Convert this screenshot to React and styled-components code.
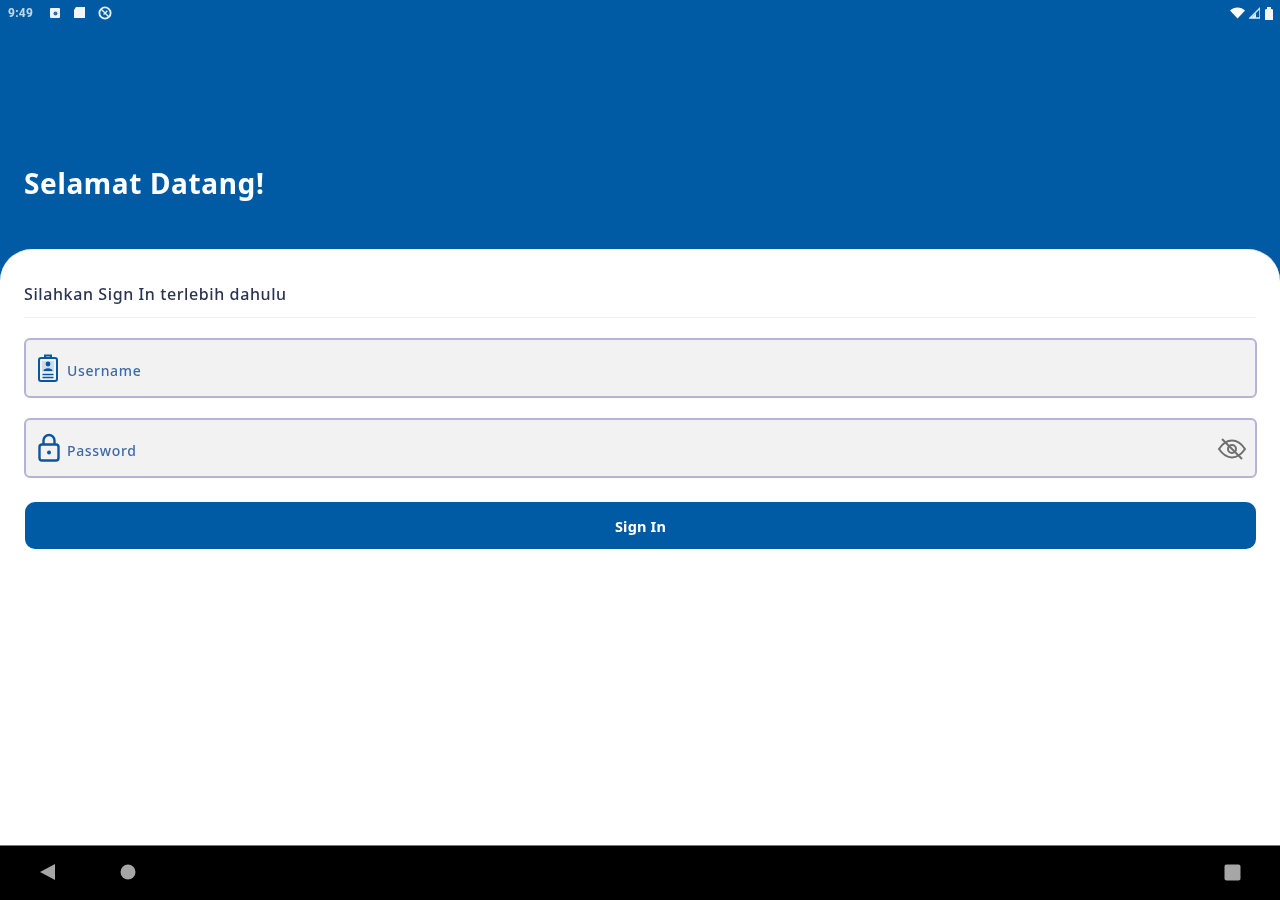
import React from "react";
import styled, { createGlobalStyle } from "styled-components";

const Global = createGlobalStyle`
  html, body { margin: 0; padding: 0; background: #fff; }
  * { box-sizing: border-box; }
`;
const Screen = styled.div`
  width: 1280px; height: 900px; display: flex; flex-direction: column;
  background: #005ba4; overflow: hidden; font-family: "Noto Sans", sans-serif;
  filter: blur(0.45px);
`;
const StatusBar = styled.div`
  height: 25px; display: flex; align-items: center; justify-content: space-between;
  padding: 0 6px 0 8px; color: #e6eef6; flex: none;
`;
const StatusGroup = styled.div`display: flex; align-items: center; gap: ${p => p.$gap}px;`;
const Clock = styled.span`font: 700 12px "Roboto", sans-serif; width: 28px; margin-right: 1px; letter-spacing: .3px; opacity: .85;`;
const Hero = styled.header`
  height: 224px; flex: none; display: flex; align-items: flex-start; padding: 140px 24px 0;
`;
const Title = styled.h1`
  margin: 0; color: #fff; font: 700 28px/36px "Noto Sans", sans-serif; letter-spacing: .65px;
`;
const Sheet = styled.main`
  flex: 1; background: #fff; border-radius: 32px 32px 0 0; padding: 34px 24px 0;
  display: flex; flex-direction: column; border-top: 1px solid #e8edf4;
`;
const Intro = styled.p`
  margin: 0; height: 34px; padding-bottom: 12px; border-bottom: 1px solid #eeeeee;
  font: 500 16px/20px "Noto Sans", sans-serif; color: #2b3350; letter-spacing: .6px;
`;
const Form = styled.form`display: flex; flex-direction: column; margin: 20px -1px 0 0;`;
const Field = styled.label`
  height: 60px; margin-bottom: 20px; display: flex; align-items: center; padding: 0 8px 0 11px;
  background: #f2f2f2; border: 2px solid #b5b3d6; border-radius: 6px;
`;
const FieldIcon = styled.span`display: flex; width: 30px; flex: none;`;
const Placeholder = styled.span`
  flex: 1; padding-top: 4px; color: #2b5a9e; font: 500 14px "Noto Sans", sans-serif; letter-spacing: .65px; opacity: .9;
`;
const ToggleIcon = styled.span`display: flex; flex: none; padding-top: 2px;`;
const SubmitButton = styled.button`
  height: 47px; margin: 4px 1px 0 1px; border: 0; border-radius: 10px; background: #005ba4; color: #fff;
  font: 700 14.5px "Noto Sans", sans-serif; letter-spacing: .2px;
`;
const NavBar = styled.nav`
  height: 55px; flex: none; background: #000; display: flex; align-items: center;
  justify-content: space-between; padding: 0 39px 2px; border-top: 1px solid #777;
`;
const NavGroup = styled.div`display: flex; align-items: center; gap: 64px;`;

const IdIcon = () => (
  <svg width="22" height="30" viewBox="0 0 22 30" fill="none" stroke="#0a57a0" strokeWidth="2">
    <rect x="2" y="5" width="18" height="23" rx="2" />
    <path d="M8 5V2.5h6V5" />
    <rect x="5" y="8" width="12" height="11" fill="#cfdcea" stroke="none" />
    <circle cx="11" cy="11" r="2.4" fill="#0a57a0" stroke="none" />
    <path d="M6.5 18c0-3.6 9-3.6 9 0z" fill="#0a57a0" stroke="none" />
    <path d="M5.5 21.5h11M5.5 24.5h11" strokeWidth="1.4" />
  </svg>
);
const LockIcon = () => (
  <svg width="24" height="30" viewBox="0 0 24 30" fill="none" stroke="#0a57a0" strokeWidth="2.4">
    <rect x="2.5" y="11.5" width="19" height="16" rx="2.5" />
    <path d="M6.5 11.5V7.5a5.5 5.5 0 0 1 11 0v4" />
    <circle cx="12" cy="19.5" r="2" fill="#0a57a0" stroke="none" />
  </svg>
);
const EyeOffIcon = () => (
  <svg width="30" height="24" viewBox="0 0 30 24" fill="none" stroke="#6f6f6f" strokeWidth="2">
    <path d="M2 12C6 6 10 3.6 15 3.6S24 6 28 12c-4 6-8 8.4-13 8.4S6 18 2 12z" />
    <circle cx="15" cy="12" r="4" />
    <path d="M5 2l20 20" />
  </svg>
);

export default function App() {
  return (
    <>
      <Global />
      <Screen>
        <StatusBar>
          <StatusGroup $gap={12}>
            <Clock>9:49</Clock>
            <svg width="12" height="12" viewBox="0 0 12 12"><rect x="1" y="1" width="10" height="10" rx="1" fill="#eef3f8" /><circle cx="6.5" cy="6.5" r="2" fill="#2a6fae" /></svg>
            <svg width="13" height="13" viewBox="0 0 13 13"><path d="M3 1h9v11H1V4z" fill="#f4f7fa" /></svg>
            <svg width="14" height="14" viewBox="0 0 15 15" fill="none" stroke="#e6eef6" strokeWidth="2"><circle cx="7.5" cy="7.5" r="6" /><path d="M3.5 3.5l8 8M10 5l-4 4" strokeWidth="1.5" /></svg>
          </StatusGroup>
          <StatusGroup $gap={4}>
            <svg width="15" height="12" viewBox="0 0 15 12"><path d="M0 3.5C4-.5 11-.5 15 3.5L7.5 11.5z" fill="#fff" /></svg>
            <svg width="11" height="12" viewBox="0 0 11 12"><path d="M11 1v10H1z" fill="none" stroke="#dfe9f3" strokeWidth="1.4" /><path d="M7 6v5H2z" fill="#dfe9f3" /></svg>
            <svg width="10" height="14" viewBox="0 0 10 14"><path d="M1 4q0-1 2-1V1h4v2q2 0 2 1v10H1z" fill="#f4f7fa" /></svg>
          </StatusGroup>
        </StatusBar>
        <Hero><Title>Selamat Datang!</Title></Hero>
        <Sheet>
          <Intro>Silahkan Sign In terlebih dahulu</Intro>
          <Form>
            <Field><FieldIcon><IdIcon /></FieldIcon><Placeholder>Username</Placeholder></Field>
            <Field><FieldIcon><LockIcon /></FieldIcon><Placeholder>Password</Placeholder><ToggleIcon><EyeOffIcon /></ToggleIcon></Field>
            <SubmitButton type="button">Sign In</SubmitButton>
          </Form>
        </Sheet>
        <NavBar>
          <NavGroup>
            <svg width="17" height="18" viewBox="0 0 17 18"><path d="M1 9L16 1v16z" fill="#a6a6a6" /></svg>
            <svg width="16" height="16" viewBox="0 0 16 16"><circle cx="8" cy="8" r="7.5" fill="#a6a6a6" /></svg>
          </NavGroup>
          <svg width="17" height="17" viewBox="0 0 17 17"><rect x="0.5" y="0.5" width="16" height="16" rx="2" fill="#a6a6a6" /></svg>
        </NavBar>
      </Screen>
    </>
  );
}
